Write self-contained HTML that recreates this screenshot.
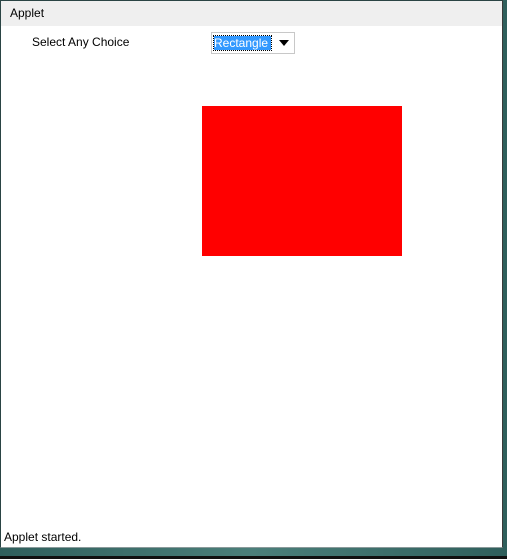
<!DOCTYPE html><html><head><style>
body{margin:0;width:507px;height:559px;background:#1e3a3a;position:relative;overflow:hidden;font-family:"Liberation Sans",Arial,sans-serif;font-size:12px;color:#000}
.teal{position:absolute;left:0;top:0;width:507px;height:559px;background:linear-gradient(90deg,#2f5f5c,#4b7f7a 50%,#2f5f5c)}
.bot{position:absolute;left:0;top:556px;width:507px;height:3px;background:#111}
.win{position:absolute;left:0;top:0;width:501px;height:546px;background:#fff;border:1px solid #2a4444;border-right:1px solid #3a3a3a;border-bottom:1px solid #8a9a9a}
.hdr{position:absolute;left:0;top:0;width:501px;height:25px;background:#efefef}
.t{position:absolute;white-space:nowrap}
.dd{position:absolute;left:210px;top:31px;width:82px;height:20px;border:1px solid #c8c8c8;background:#fff}
.sel{position:absolute;left:2px;top:3px;width:57px;height:14px;background:#3399ff;color:#fff;outline:1px dotted #000;line-height:14px;font-size:12px}
.rect{position:absolute;left:201px;top:105px;width:200px;height:150px;background:#f00}
</style></head><body>
<div class="teal"></div><div class="bot"></div>
<div class="win">
<div class="hdr"></div>
<div class="t" style="left:9px;top:5px">Applet</div>
<div class="t" style="left:31px;top:34px">Select Any Choice</div>
<div class="dd"><div class="sel">Rectangle</div>
<svg style="position:absolute;left:67px;top:7px" width="10" height="6"><path d="M0 0H10L5 6Z" fill="#000"/></svg></div>
<div class="rect"></div>
<div class="t" style="left:3px;top:529px">Applet started.</div>
</div>
</body></html>
